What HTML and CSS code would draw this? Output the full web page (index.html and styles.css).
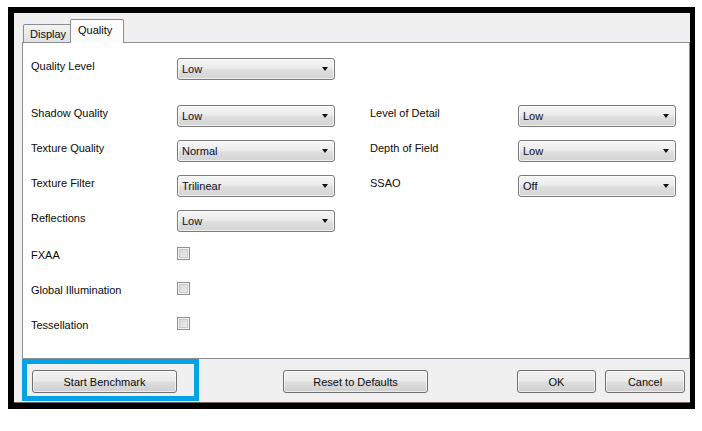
FILE: index.html
```html
<!DOCTYPE html>
<html lang="en">
<head>
  <meta charset="UTF-8">
  <title>Settings - Quality</title>
  <link rel="stylesheet" href="styles.css">
</head>
<body>
  <div class="window">
    <div class="dialog">
      <div class="tabs">
        <div class="tab">Display</div>
        <div class="tab active">Quality</div>
      </div>

      <div class="pane">
        <div class="row first">
          <div class="field">
            <span class="label">Quality Level</span>
            <div class="combo">Low</div>
          </div>
        </div>

        <div class="row">
          <div class="field">
            <span class="label">Shadow Quality</span>
            <div class="combo">Low</div>
          </div>
          <div class="field right">
            <span class="label">Level of Detail</span>
            <div class="combo">Low</div>
          </div>
        </div>

        <div class="row">
          <div class="field">
            <span class="label">Texture Quality</span>
            <div class="combo">Normal</div>
          </div>
          <div class="field right">
            <span class="label">Depth of Field</span>
            <div class="combo">Low</div>
          </div>
        </div>

        <div class="row">
          <div class="field">
            <span class="label">Texture Filter</span>
            <div class="combo">Trilinear</div>
          </div>
          <div class="field right">
            <span class="label">SSAO</span>
            <div class="combo">Off</div>
          </div>
        </div>

        <div class="row">
          <div class="field">
            <span class="label">Reflections</span>
            <div class="combo">Low</div>
          </div>
        </div>

        <div class="row checkrow">
          <div class="field">
            <span class="label">FXAA</span>
            <span class="check"></span>
          </div>
        </div>

        <div class="row checkrow">
          <div class="field">
            <span class="label">Global Illumination</span>
            <span class="check"></span>
          </div>
        </div>

        <div class="row checkrow">
          <div class="field">
            <span class="label">Tessellation</span>
            <span class="check"></span>
          </div>
        </div>
      </div>

      <div class="footer">
        <div class="highlight"></div>
        <button class="btn wide">Start Benchmark</button>
        <button class="btn wide reset">Reset to Defaults</button>
        <button class="btn small ok">OK</button>
        <button class="btn small cancel">Cancel</button>
      </div>
    </div>
  </div>
</body>
</html>
```

FILE: styles.css
```css
body {
  margin: 0;
  background: #fff;
  font-family: "Liberation Sans", Arial, sans-serif;
  font-size: 11px;
  color: #0a0a0a;
}

.window {
  margin: 7px 0 0 8px;
  width: 676px;
  border-style: solid;
  border-color: #000;
  border-width: 6px 5px 6px 6px;
}

.dialog {
  position: relative;
  background: #f0f0f0;
  padding: 6px 0 0 8px;
  border-bottom: 1px solid #7a605a;
}

/* Tabs */
.tabs {
  display: flex;
  align-items: flex-end;
  height: 23px;
  margin-left: 1px;
}

.tab {
  box-sizing: border-box;
  height: 18px;
  width: 48px;
  padding: 3px 0 0 6px;
  border: 1px solid #898c95;
  border-bottom: none;
  border-radius: 2px 2px 0 0;
  background: linear-gradient(#f3f3f3, #e1e1e1);
}

.tab.active {
  position: relative;
  top: 1px;
  height: 24px;
  width: 54px;
  margin-left: -1px;
  padding: 4px 0 0 7px;
  background: #fcfcfc;
}

/* Pane */
.pane {
  height: 300px;
  padding: 15px 0 0 8px;
  background: #fff;
  border: 1px solid #898c95;
}

.row {
  display: flex;
  height: 22px;
  margin-bottom: 13px;
}

.row.first {
  margin-bottom: 25px;
}

.field {
  display: flex;
  width: 339px;
}

.field.right {
  width: auto;
}

.label {
  width: 146px;
  padding-top: 2px;
}

.checkrow .label {
  padding-top: 4px;
}

.field.right .label {
  width: 148px;
}

.combo {
  position: relative;
  box-sizing: border-box;
  width: 158px;
  height: 22px;
  padding: 4px 0 0 4px;
  border: 1px solid #7a7a7a;
  border-radius: 3px;
  background: linear-gradient(#f6f6f6 0%, #ececec 45%, #dedede 55%, #d3d3d3 100%);
  box-shadow: inset 0 0 0 1px rgba(255,255,255,0.7);
  color: #0d0d1a;
}

.combo::after {
  content: "";
  position: absolute;
  right: 6px;
  top: 8px;
  border-left: 3.5px solid transparent;
  border-right: 3.5px solid transparent;
  border-top: 4px solid #111;
}

.check {
  box-sizing: border-box;
  width: 13px;
  height: 13px;
  margin-top: 2px;
  border: 1px solid #8e8f8f;
  background: linear-gradient(135deg, #cfcfcf, #f4f4f4);
  box-shadow: inset 0 0 0 1px #f3f3f3, inset 0 0 0 2px #c9c9c9;
}

/* Footer buttons */
.footer {
  display: flex;
  height: 43px;
  padding: 11px 5px 0 10px;
  box-sizing: border-box;
}

.highlight {
  position: absolute;
  left: 8px;
  bottom: 1px;
  width: 167px;
  height: 32px;
  border: 5px solid #00a2e8;
}

.btn {
  position: relative;
  height: 23px;
  padding: 0;
  font-family: inherit;
  font-size: 11px;
  color: #0a0a0a;
  border: 1px solid #707070;
  border-radius: 3px;
  background: linear-gradient(#f2f2f2 0%, #ebebeb 45%, #dddddd 55%, #cfcfcf 100%);
  box-shadow: inset 0 0 0 1px rgba(255,255,255,0.6);
}

.btn.wide {
  width: 145px;
}

.btn.small {
  width: 79px;
}

.btn.reset {
  margin-left: 106px;
}

.btn.ok {
  margin-left: auto;
}

.btn.cancel {
  width: 80px;
  margin-left: 9px;
}
```
